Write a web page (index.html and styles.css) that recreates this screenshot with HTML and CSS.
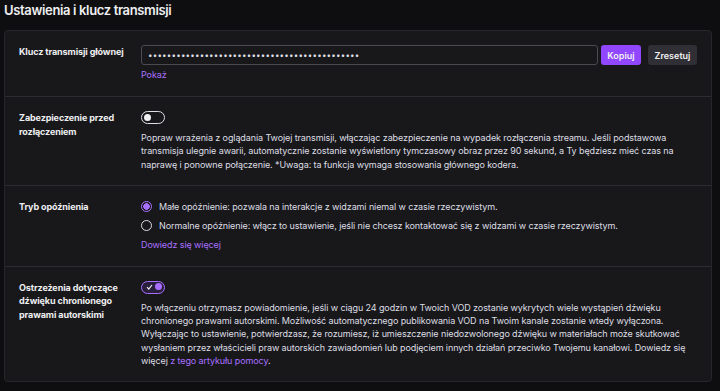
FILE: index.html
```html
<!DOCTYPE html>
<html lang="pl">
<head>
  <meta charset="UTF-8" />
  <meta name="viewport" content="width=device-width, initial-scale=1.0"/>
  <title>Ustawienia i klucz transmisji</title>
  <link rel="stylesheet" href="styles.css">
</head>
<body>
  <h1>Ustawienia i klucz transmisji</h1>
  <div class="card">
    <div class="row">
      <div class="label">Klucz transmisji głównej</div>
      <div class="content">
        <div class="key-line">
          <div class="key-input">•••••••••••••••••••••••••••••••••••••••••••••</div>
          <button class="btn primary">Kopiuj</button>
          <button class="btn secondary">Zresetuj</button>
        </div>
        <a href="#" class="link show">Pokaż</a>
      </div>
    </div>

    <div class="row">
      <div class="label">Zabezpieczenie przed rozłączeniem</div>
      <div class="content">
        <span class="toggle"><span class="knob"></span></span>
        <p class="desc">Popraw wrażenia z oglądania Twojej transmisji, włączając zabezpieczenie na wypadek rozłączenia streamu. Jeśli podstawowa transmisja ulegnie awarii, automatycznie zostanie wyświetlony tymczasowy obraz przez 90 sekund, a Ty będziesz mieć czas na naprawę i ponowne połączenie. *Uwaga: ta funkcja wymaga stosowania głównego kodera.</p>
      </div>
    </div>

    <div class="row">
      <div class="label">Tryb opóźnienia</div>
      <div class="content">
        <label class="radio"><span class="dot checked"></span>Małe opóźnienie: pozwala na interakcje z widzami niemal w czasie rzeczywistym.</label>
        <label class="radio"><span class="dot"></span>Normalne opóźnienie: włącz to ustawienie, jeśli nie chcesz kontaktować się z widzami w czasie rzeczywistym.</label>
        <a href="#" class="link">Dowiedz się więcej</a>
      </div>
    </div>

    <div class="row">
      <div class="label">Ostrzeżenia dotyczące dźwięku chronionego prawami autorskimi</div>
      <div class="content">
        <span class="toggle on">
          <svg class="check" width="7" height="6" viewBox="0 0 7 6"><path d="M1 3.2 L2.8 5 L6 1" fill="none" stroke="#efeff1" stroke-width="1.2"/></svg>
          <span class="knob"></span>
        </span>
        <p class="desc">Po włączeniu otrzymasz powiadomienie, jeśli w ciągu 24 godzin w Twoich VOD zostanie wykrytych wiele wystąpień dźwięku chronionego prawami autorskimi. Możliwość automatycznego publikowania VOD na Twoim kanale zostanie wtedy wyłączona. Wyłączając to ustawienie, potwierdzasz, że rozumiesz, iż umieszczenie niedozwolonego dźwięku w materiałach może skutkować wysłaniem przez właścicieli praw autorskich zawiadomień lub podjęciem innych działań przeciwko Twojemu kanałowi. Dowiedz się więcej <a href="#" class="link inline">z tego artykułu pomocy</a>.</p>
      </div>
    </div>
  </div>
</body>
</html>
```

FILE: styles.css
```css
body { margin: 0; padding: 0 8px 0 4px; background: #0e0e10; color: #efeff1; font-family: Inter, "Noto Sans", sans-serif; font-size: 9px; letter-spacing: -0.1px; }
h1 { margin: 0; height: 30px; font-size: 13px; font-weight: 600; letter-spacing: -0.35px; line-height: 20px; }
.card { background: #18181b; border: 1px solid #26262b; border-radius: 4px; }
.row { display: grid; grid-template-columns: 122px 1fr; padding: 14px; border-top: 1px solid #2c2c31; }
.row:first-child { border-top: none; }
.label { font-weight: 700; line-height: 13.5px; padding-right: 10px; }
.content { display: flex; flex-direction: column; align-items: flex-start; }
.key-line { display: flex; align-self: stretch; align-items: center; gap: 3px; }
.key-input { flex: 1; height: 20px; box-sizing: border-box; border: 1px solid #4a4a50; border-radius: 3px; padding: 0 6px; line-height: 18px; letter-spacing: 0.2px; color: #dedee3; font-size: 8px; overflow: hidden; white-space: nowrap; }
.btn { height: 20px; border: none; border-radius: 3px; font-family: inherit; font-size: 9px; font-weight: 600; color: #efeff1; padding: 0 6px; }
.btn.primary { background: #9147ff; width: 40px; }
.btn.secondary { background: #2f2f35; margin-left: 4px; width: 49px; }
.link { display: block; color: #a970ff; text-decoration: none; line-height: 14px; }
.link.inline { display: inline; line-height: inherit; }
.show { margin-top: 3px; }
.desc { margin: 7px 0 0; line-height: 13.3px; color: #dedee3; }
.toggle { position: relative; display: block; width: 24px; height: 13px; box-sizing: border-box; border: 1.5px solid #dedee3; border-radius: 7px; }
.toggle .knob { position: absolute; left: 2px; top: 1.5px; width: 7px; height: 7px; border-radius: 50%; background: #efeff1; }
.toggle.on { border-color: #a970ff; background: #2a1e3d; }
.toggle.on .knob { left: auto; right: 2px; background: #a970ff; }
.toggle .check { position: absolute; left: 3.5px; top: 2.5px; }
.radio { display: flex; align-items: center; height: 13px; margin-bottom: 6px; color: #dedee3; }
.dot { width: 11px; height: 11px; box-sizing: border-box; border: 1.5px solid #dedee3; border-radius: 50%; margin-right: 7px; flex-shrink: 0; }
.dot.checked { border-color: #a970ff; background: radial-gradient(circle, #a970ff 0 3px, transparent 3.5px); }
```
